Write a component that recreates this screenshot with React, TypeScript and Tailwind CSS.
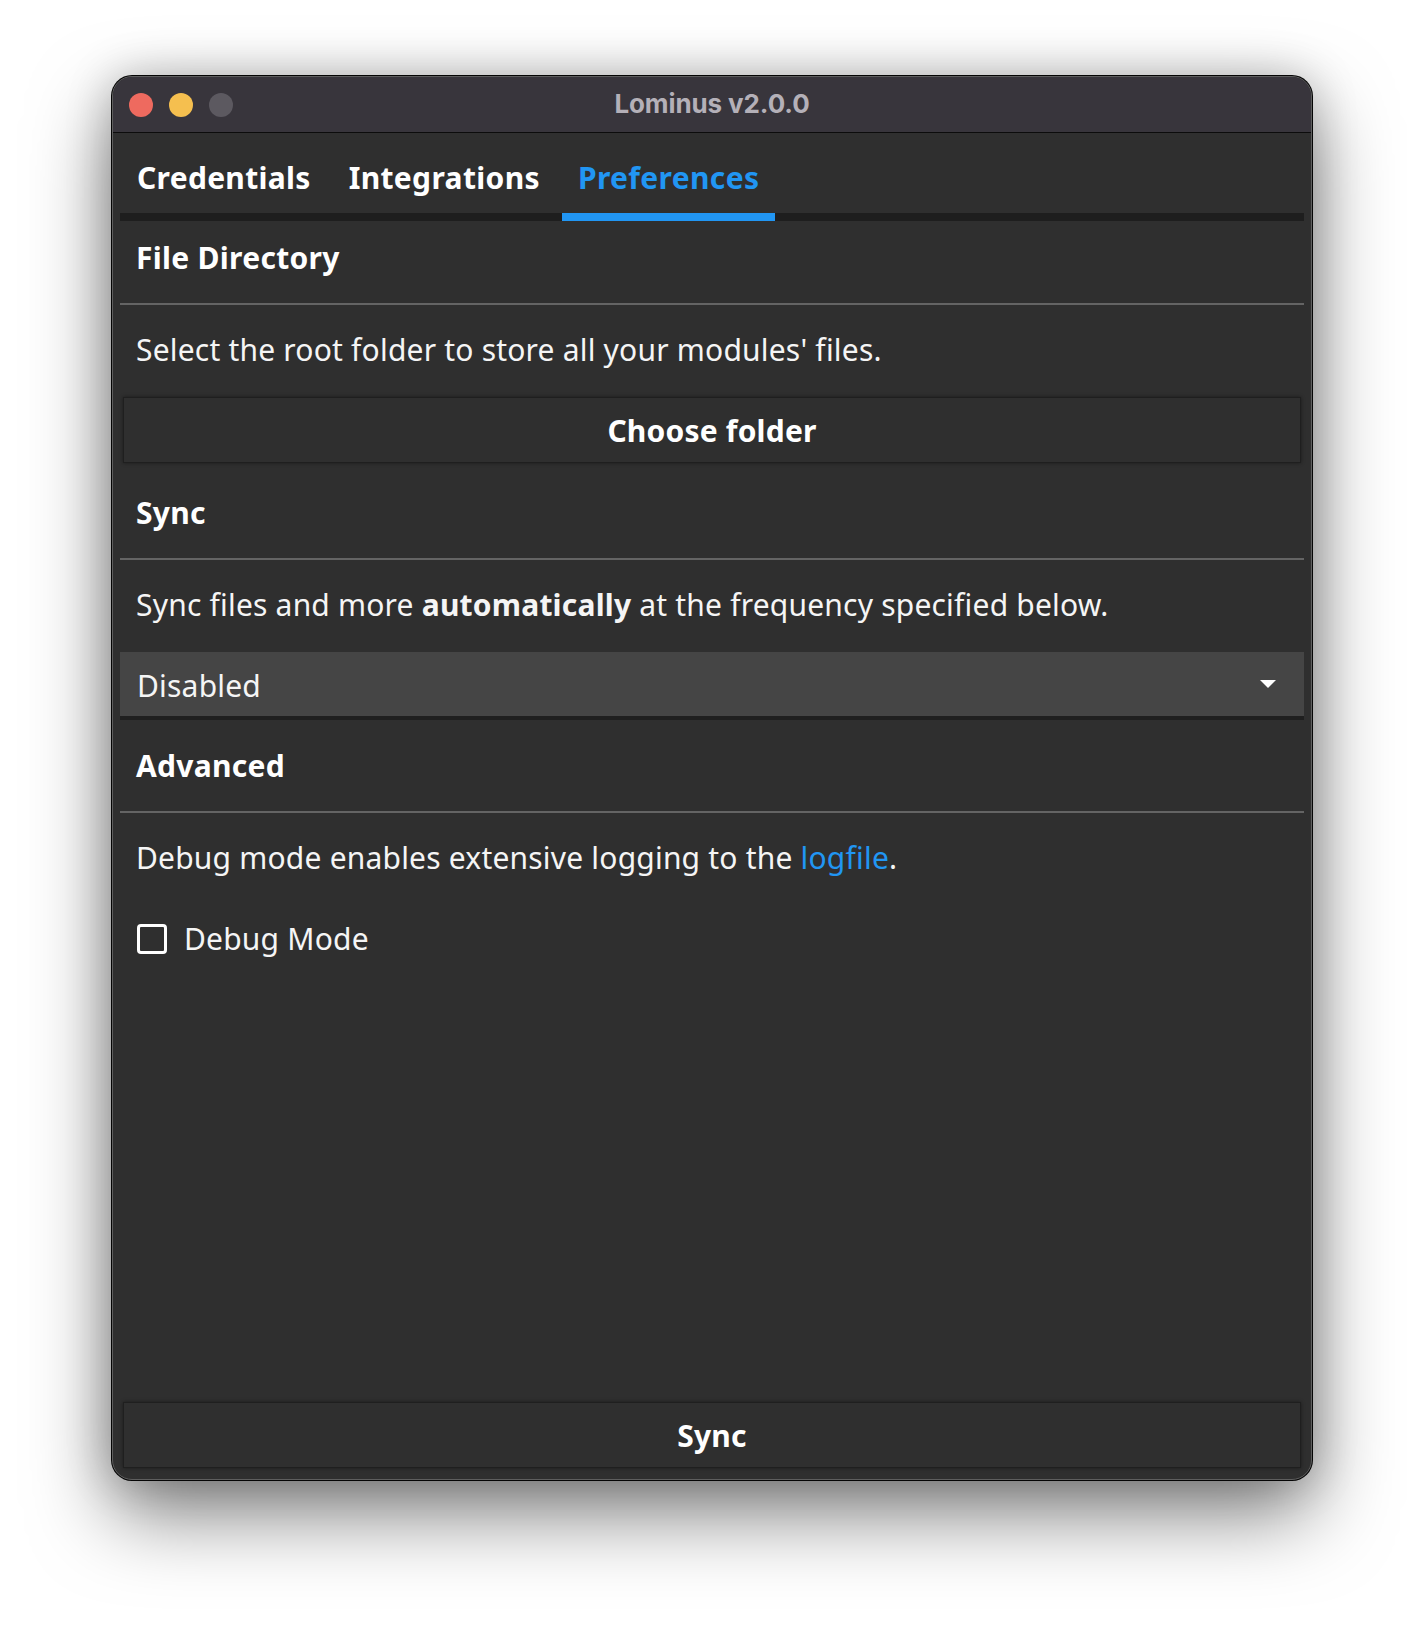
import React from "react";

const sans = { fontFamily: '"Noto Sans", "Open Sans", sans-serif' };

function SectionHeading({ children }: { children: React.ReactNode }) {
  return (
    <div className="px-4 pt-[17px] pb-[25px] border-b-2 border-[#646464]">
      <div className="text-[30px] leading-[40px] font-bold text-white tracking-[0.3px]">{children}</div>
    </div>
  );
}

function Description({ children }: { children: React.ReactNode }) {
  return (
    <div className="px-4 pt-[25px] pb-[27px]">
      <div className="text-[30px] leading-[40px] text-[#f5f5f5] tracking-[0.2px]">{children}</div>
    </div>
  );
}

function FlatButton({ label }: { label: string }) {
  return (
    <button className="mx-[3px] h-[66px] flex items-center justify-center pt-[2px] bg-[#2f2f2f] border border-[#1f1f1f] shadow-[0_0_4px_rgba(0,0,0,0.45)] text-[30px] leading-[40px] font-bold text-white tracking-[0.2px]">
      {label}
    </button>
  );
}

export default function App() {
  return (
    <div className="w-full h-[1628px] bg-white flex justify-center pt-[76px]" style={sans}>
      <div className="w-[1200px] h-[1404px] rounded-[20px] overflow-hidden border border-[#5e5e5e] bg-[#2f2f2f] flex flex-col shadow-[0_0_0_1px_#050505,0_34px_80px_rgba(0,0,0,0.5),0_0_46px_rgba(0,0,0,0.22)]">
        {/* Title bar */}
        <div className="relative h-[56px] shrink-0 bg-[#38353c] border-b border-[#0c0c0c] flex items-center">
          <div className="flex items-center gap-[16px] pl-[16px]">
            <span className="w-[24px] h-[24px] rounded-full bg-[#ee6a5f]" />
            <span className="w-[24px] h-[24px] rounded-full bg-[#f5bf4f]" />
            <span className="w-[24px] h-[24px] rounded-full bg-[#5c5960]" />
          </div>
          <div
            className="absolute inset-0 flex items-center justify-center pb-[2px] text-[26px] font-bold text-[#b4b0b8] tracking-[-0.1px]"
            style={{ fontFamily: 'Inter, "Liberation Sans", sans-serif' }}
          >
            Lominus v2.0.0
          </div>
        </div>

        {/* Content */}
        <div className="flex-1 flex flex-col px-[7px] pb-[11px]">
          {/* Tabs */}
          <div className="h-[88px] shrink-0 flex gap-[6px] pl-px border-b-[8px] border-[#1e1e1e]">
            <div className="px-4 pt-[25px] -mb-[8px] border-b-[8px] border-transparent text-[30px] leading-[40px] font-bold text-white tracking-[0.3px]">
              Credentials
            </div>
            <div className="px-4 pt-[25px] -mb-[8px] border-b-[8px] border-transparent text-[30px] leading-[40px] font-bold text-white tracking-[0.35px]">
              Integrations
            </div>
            <div className="px-4 pt-[25px] -mb-[8px] border-b-[8px] border-[#2196f3] text-[30px] leading-[40px] font-bold text-[#2196f3] tracking-[0.35px]">
              Preferences
            </div>
          </div>

          {/* File Directory */}
          <SectionHeading>File Directory</SectionHeading>
          <Description>Select the root folder to store all your modules' files.</Description>
          <FlatButton label="Choose folder" />

          {/* Sync */}
          <div className="mt-[13px]">
            <SectionHeading>Sync</SectionHeading>
          </div>
          <Description>
            Sync files and more <span className="font-bold">automatically</span> at the frequency specified below.
          </Description>
          <div className="h-[68px] bg-[#454545] border-b-[4px] border-[#1f1f1f] flex items-center justify-between pl-[17px] pr-[28px]">
            <span className="pt-[3px] text-[30px] leading-[40px] text-[#f5f5f5] tracking-[0.2px]">Disabled</span>
            <svg width="16" height="8" viewBox="0 0 16 8">
              <path d="M0 0 L16 0 L8 8 Z" fill="#ffffff" />
            </svg>
          </div>

          {/* Advanced */}
          <div className="mt-[9px]">
            <SectionHeading>Advanced</SectionHeading>
          </div>
          <div className="px-4 pt-[25px]">
            <div className="text-[30px] leading-[40px] text-[#f5f5f5] tracking-[0.2px]">
              Debug mode enables extensive logging to the <span className="text-[#2196f3]">logfile</span>.
            </div>
          </div>
          <div className="flex items-center gap-[17px] pl-[17px] mt-[41px]">
            <span className="w-[30px] h-[30px] rounded-[4px] border-[3px] border-white" />
            <span className="text-[30px] leading-[40px] text-[#f5f5f5] tracking-[0.2px]">Debug Mode</span>
          </div>

          <div className="flex-1" />

          <FlatButton label="Sync" />
        </div>
      </div>
    </div>
  );
}
